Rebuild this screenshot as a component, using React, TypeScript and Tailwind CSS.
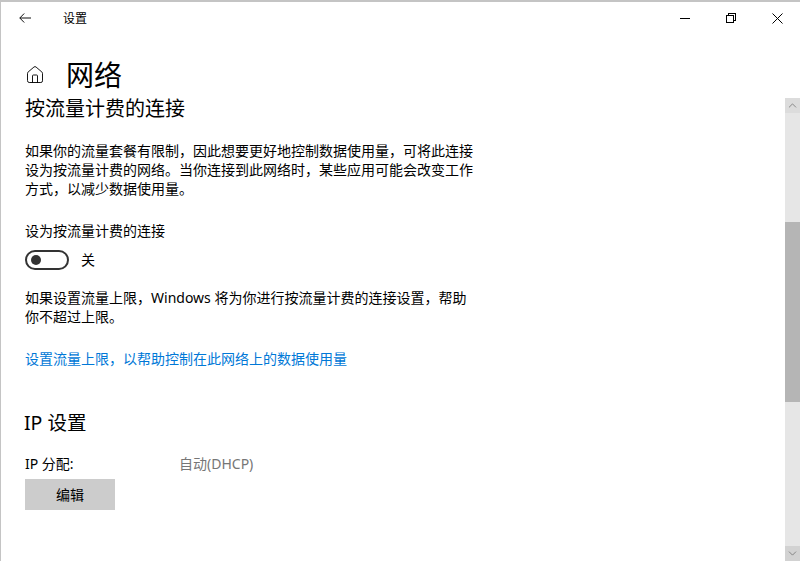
import React from 'react';
import { Home, ChevronUp, ChevronDown } from 'lucide-react';

const cjk = "font-['Noto_Sans','Noto_Sans_CJK_SC',sans-serif]";

function BackIcon() {
  return (
    <svg width="12" height="10" viewBox="0 0 12 10" fill="none" stroke="#111" strokeWidth="1">
      <path d="M0.8 5H12M5.2 0.5L0.8 5L5.2 9.5" />
    </svg>
  );
}

function MinIcon() {
  return (
    <svg width="10" height="10" viewBox="0 0 10 10" fill="none" stroke="#000" strokeWidth="1" shapeRendering="crispEdges">
      <path d="M0 5.5H10" />
    </svg>
  );
}

function RestoreIcon() {
  return (
    <svg width="10" height="10" viewBox="0 0 10 10" fill="none" stroke="#000" strokeWidth="1" shapeRendering="crispEdges">
      <rect x="0.5" y="2.5" width="7" height="7" />
      <path d="M2.5 2.5V0.5H9.5V7.5H7.5" />
    </svg>
  );
}

function CloseIcon() {
  return (
    <svg width="11" height="11" viewBox="0 0 11 11" fill="none" stroke="#000" strokeWidth="1">
      <path d="M0.5 0.5L10.5 10.5M10.5 0.5L0.5 10.5" />
    </svg>
  );
}

function Scrollbar() {
  return (
    <div className="w-[15px] h-full bg-[#e6e6e6] flex flex-col shrink-0">
      <div className="h-[15px] bg-[#dcdcdc] flex items-center justify-center text-[#606060]">
        <ChevronUp size={13} strokeWidth={1.25} />
      </div>
      <div className="h-[109px]" />
      <div className="h-[180px] bg-[#b5b5b5]" />
      <div className="flex-1" />
      <div className="h-[15px] bg-[#d2d2d2] flex items-center justify-center text-[#606060]">
        <ChevronDown size={13} strokeWidth={1.25} />
      </div>
    </div>
  );
}

export default function App() {
  return (
    <div className={`w-[800px] h-[561px] bg-white border-t-2 border-l border-[#c4c4c4] flex flex-col overflow-hidden text-black ${cjk}`}>
      <div className="h-[32px] flex items-center shrink-0">
        <div className="w-[48px] flex justify-center -mt-[1px]">
          <BackIcon />
        </div>
        <span className="text-[12px] ml-[14px] pt-[2px]">设置</span>
        <div className="ml-auto flex items-center">
          <div className="w-[46px] flex justify-center"><MinIcon /></div>
          <div className="w-[46px] flex justify-center"><RestoreIcon /></div>
          <div className="w-[46px] flex justify-center"><CloseIcon /></div>
        </div>
      </div>

      <div className="h-[64px] flex items-center shrink-0 pl-[24px] pt-[18px]">
        <Home size={20} strokeWidth={1.1} />
        <h1 className="text-[28px] ml-[21px] leading-none">网络</h1>
      </div>

      <div className="flex-1 flex min-h-0">
        <div className="flex-1 pl-[24px]">
          <h2 className="text-[20px] leading-[20px] pt-[1px]">按流量计费的连接</h2>
          <p className="text-[14px] leading-[19px] w-[450px] mt-[22px]">
            如果你的流量套餐有限制，因此想要更好地控制数据使用量，可将此连接设为按流量计费的网络。当你连接到此网络时，某些应用可能会改变工作方式，以减少数据使用量。
          </p>
          <div className="text-[14px] leading-[20px] mt-[23px]">设为按流量计费的连接</div>
          <div className="flex items-center mt-[8px]">
            <div className="w-[44px] h-[20px] rounded-full border-2 border-[#333] flex items-center pl-[4px]">
              <div className="w-[10px] h-[10px] rounded-full bg-[#333]" />
            </div>
            <span className="text-[14px] ml-[12px]">关</span>
          </div>
          <p className="text-[14px] leading-[19px] w-[450px] mt-[18px]">
            如果设置流量上限，Windows 将为你进行按流量计费的连接设置，帮助你不超过上限。
          </p>
          <a className="block text-[14px] leading-[20px] text-[#0078d7] mt-[23px]">
            设置流量上限，以帮助控制在此网络上的数据使用量
          </a>
          <h2 className="text-[19.5px] leading-[26px] mt-[41px] -ml-[1px]">IP 设置</h2>
          <div className="flex text-[14px] leading-[20px] mt-[18px]">
            <span className="w-[154px]">IP 分配:</span>
            <span className="text-[#767676]">自动(DHCP)</span>
          </div>
          <button className="block w-[90px] h-[31px] bg-[#cccccc] text-[14px] mt-[5px]">编辑</button>
        </div>
        <Scrollbar />
      </div>
    </div>
  );
}
